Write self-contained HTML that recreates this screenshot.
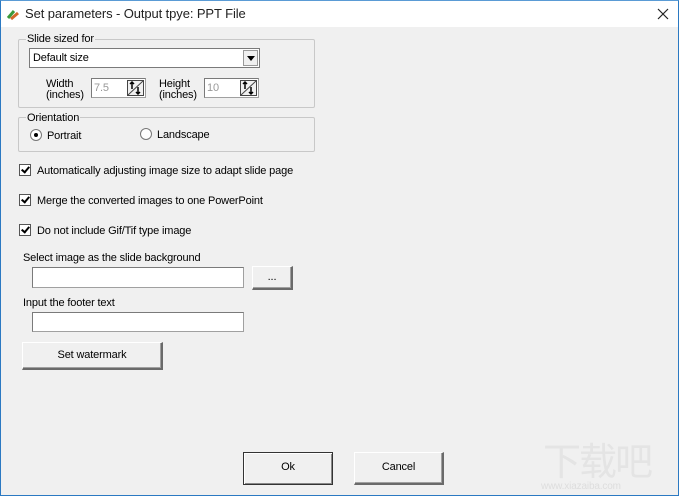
<!DOCTYPE html><html><head><style>
*{box-sizing:border-box}
body{margin:0;width:679px;height:496px;overflow:hidden;font-family:"Liberation Sans",Arial,sans-serif;font-size:11px;letter-spacing:-0.15px;color:#000}
.win{position:absolute;left:0;top:0;width:679px;height:496px;background:#f0f0f0;border:1px solid #2b79c2;border-top:1px solid #5a9bd5}
.title{position:absolute;left:0;top:0;width:677px;height:26px;background:#fff}
.title span{position:absolute;left:24px;top:5px;font-size:13px;color:#222;letter-spacing:-0.1px}
.a{position:absolute}
.grp{position:absolute;border:1px solid #c8c8c8;border-radius:2px}
.lg{position:absolute;background:#f0f0f0;padding:0 1px}
.inp{position:absolute;background:#fff;border:1px solid #a0a0a0;border-top-color:#7a7a7a;border-left-color:#7a7a7a}
.btn{position:absolute;background:#f0f0f0;border:1px solid #fff;border-right:2px solid #6a6a6a;border-bottom:2px solid #6a6a6a;box-shadow:inset -1px -1px #a0a0a0;text-align:center}
.cb{position:absolute;width:12px;height:12px;background:#fff;border:1px solid #555}
.cb:after{content:"";position:absolute;left:3px;top:0px;width:3px;height:6px;border-right:2px solid #000;border-bottom:2px solid #000;transform:rotate(40deg)}
.rd{position:absolute;width:12px;height:12px;border-radius:50%;background:#fff;border:1px solid #777}
</style></head><body><div class="win">
<div class="title">
<svg class="a" style="left:5px;top:6px" width="14" height="14"><path d="M2 11 L8 4" stroke="#3a9a3a" stroke-width="3"/><path d="M5 12 L12 6" stroke="#d2692a" stroke-width="3"/></svg>
<span>Set parameters - Output tpye: PPT File</span>
<svg class="a" style="left:656px;top:7px" width="12" height="12"><path d="M1 1L11 11M11 1L1 11" stroke="#222" stroke-width="1.2"/></svg>
</div>
<div class="grp" style="left:17px;top:38px;width:297px;height:69px"></div>
<div class="lg a" style="left:25px;top:32px">Slide sized for</div>
<div class="inp" style="left:28px;top:47px;width:231px;height:20px;border-color:#7a7a7a"><span class="a" style="left:3px;top:3px">Default size</span>
<div class="a" style="right:1px;top:1px;width:15px;height:16px;background:#f0f0f0;border:1px solid #999"><svg class="a" style="left:3px;top:5px" width="8" height="5"><path d="M0 0H8L4 5Z" fill="#000"/></svg></div></div>
<div class="a" style="left:45px;top:78px;line-height:11px">Width<br>(inches)</div>
<div class="inp" style="left:90px;top:77px;width:55px;height:20px"><span class="a" style="left:2px;top:3px;color:#999">7.5</span><svg class="a" style="right:1px;top:1px" width="17" height="16"><rect x="0.5" y="0.5" width="16" height="15" fill="#f0f0f0" stroke="#444"/><path d="M1 15L16 1" stroke="#444"/><path d="M5 2v7M3 4l2-2 2 2M11 7v7M9 12l2 2 2-2" stroke="#000" stroke-width="1.5" fill="none"/></svg></div>
<div class="a" style="left:158px;top:78px;line-height:11px">Height<br>(inches)</div>
<div class="inp" style="left:203px;top:77px;width:55px;height:20px"><span class="a" style="left:2px;top:3px;color:#999">10</span><svg class="a" style="right:1px;top:1px" width="17" height="16"><rect x="0.5" y="0.5" width="16" height="15" fill="#f0f0f0" stroke="#444"/><path d="M1 15L16 1" stroke="#444"/><path d="M5 2v7M3 4l2-2 2 2M11 7v7M9 12l2 2 2-2" stroke="#000" stroke-width="1.5" fill="none"/></svg></div>
<div class="grp" style="left:17px;top:116px;width:297px;height:35px"></div>
<div class="lg a" style="left:25px;top:111px">Orientation</div>
<div class="rd" style="left:29px;top:128px"><div class="a" style="left:3px;top:3px;width:4px;height:4px;border-radius:50%;background:#000"></div></div>
<div class="a" style="left:46px;top:129px">Portrait</div>
<div class="rd" style="left:139px;top:127px"></div>
<div class="a" style="left:156px;top:128px">Landscape</div>
<div class="cb" style="left:18px;top:163px"></div><div class="a" style="left:36px;top:164px">Automatically adjusting image size to adapt slide page</div>
<div class="cb" style="left:18px;top:193px"></div><div class="a" style="left:36px;top:194px">Merge the converted images to one PowerPoint</div>
<div class="cb" style="left:18px;top:223px"></div><div class="a" style="left:36px;top:224px">Do not include Gif/Tif type image</div>
<div class="a" style="left:22px;top:251px">Select image as the slide background</div>
<div class="inp" style="left:31px;top:266px;width:212px;height:21px"></div>
<div class="btn" style="left:251px;top:265px;width:41px;height:24px;line-height:20px">...</div>
<div class="a" style="left:22px;top:296px">Input the footer text</div>
<div class="inp" style="left:31px;top:311px;width:212px;height:20px"></div>
<div class="btn" style="left:21px;top:341px;width:141px;height:28px;line-height:24px">Set watermark</div>
<div class="btn" style="left:242px;top:451px;width:90px;height:33px;line-height:29px;border:1px solid #333;box-shadow:inset 1px 1px #fff,inset -1px -1px #888">Ok</div>
<div class="btn" style="left:353px;top:451px;width:90px;height:33px;line-height:29px">Cancel</div>
<div class="a" style="left:542px;top:436px;font-size:38px;color:#e4e4e4;font-family:'Noto Sans CJK SC',sans-serif;letter-spacing:-2px;line-height:44px">下载吧</div>
<div class="a" style="left:540px;top:480px;font-size:10px;color:#ddd">www.xiazaiba.com</div>
</div></body></html>
